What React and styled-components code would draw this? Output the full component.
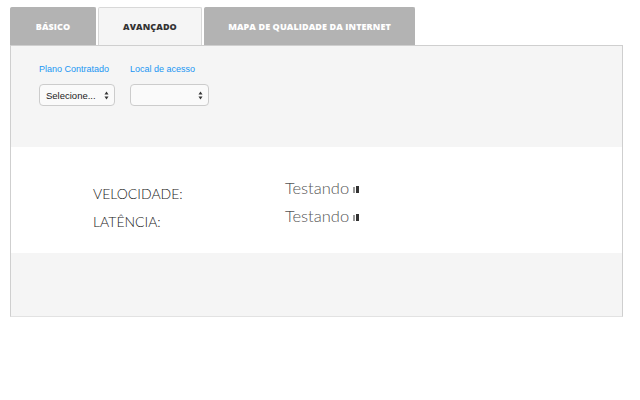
import React from 'react'
import styled, { createGlobalStyle } from 'styled-components'

const GlobalStyle = createGlobalStyle`
    body {
        margin: 0;
        background: #ffffff;
        font-family: "Liberation Sans", Arial, sans-serif;
    }
`

const Page = styled.div`
    padding: 7px 17px 0 10px;
`

const Tabs = styled.div`
    display: flex;
    gap: 2px;
`

const Tab = styled.div`
    display: flex;
    align-items: center;
    justify-content: center;
    width: ${({ width }) => width}px;
    height: 38px;
    box-sizing: border-box;
    background-color: ${({ active }) => (active ? '#f5f5f5' : '#b3b3b3')};
    border: 1px solid ${({ active }) => (active ? '#d8d8d8' : '#b3b3b3')};
    border-bottom: none;
    border-radius: 2px 2px 0 0;
    color: ${({ active }) => (active ? '#333333' : '#ffffff')};
    font-family: "Open Sans", sans-serif;
    font-weight: 800;
    font-size: 9px;
    letter-spacing: 0.1px;
    margin-bottom: ${({ active }) => (active ? '-1px' : '0')};
    position: relative;
    z-index: ${({ active }) => (active ? 1 : 0)};
`

const Panel = styled.div`
    border: 1px solid #cfcfcf;
    border-bottom-color: #e2e2e2;
    background-color: #f5f5f5;
`

const Filters = styled.div`
    display: flex;
    gap: 15px;
    height: 101px;
    padding: 18px 0 0 28px;
    box-sizing: border-box;
`

const Field = styled.div`
    display: flex;
    flex-direction: column;
    gap: 10px;
`

const Label = styled.label`
    font-size: 9px;
    color: #2196f3;
    font-family: "Liberation Sans", Arial, sans-serif;
`

const Select = styled.div`
    display: flex;
    align-items: center;
    justify-content: space-between;
    width: ${({ width }) => width}px;
    height: 22px;
    box-sizing: border-box;
    padding: 0 5px 0 6px;
    border: 1px solid #cccccc;
    border-radius: 4px;
    background-color: #fafafa;
    font-size: 9.5px;
    color: #222;
`

const Results = styled.div`
    background-color: #ffffff;
    height: 106px;
    padding: 31px 0 0 82px;
    box-sizing: border-box;
    display: grid;
    grid-template-columns: 192px auto;
    grid-auto-rows: 28px;
    justify-content: start;
    align-content: start;
`

const Metric = styled.div`
    font-family: "Lato", sans-serif;
    font-weight: 300;
    font-size: 14px;
    line-height: 18px;
    color: #222;
    padding-top: 7px;
`

const Status = styled.div`
    display: flex;
    align-items: center;
    align-self: start;
    gap: 4px;
    height: 20px;
    font-family: "Lato", sans-serif;
    font-weight: 300;
    font-size: 16.5px;
    color: #555;
`

const Footer = styled.div`
    height: 63px;
`

const Arrows = () => (
    <svg width="5" height="9" viewBox="0 0 5 9">
        <path d="M2.5 0.5 L4.5 3.5 H0.5 Z" fill="#333" />
        <path d="M2.5 8.5 L4.5 5.5 H0.5 Z" fill="#333" />
    </svg>
)

const Bars = () => (
    <svg width="6" height="7" viewBox="0 0 6 7" style={{ marginTop: 3 }}>
        <rect x="0" y="1" width="2" height="6" fill="#999" />
        <rect x="3" y="0" width="3" height="7" fill="#333" />
    </svg>
)

const App = () => (
    <>
        <GlobalStyle />
        <Page>
            <Tabs>
                <Tab width={86}>BÁSICO</Tab>
                <Tab width={104} active>AVANÇADO</Tab>
                <Tab width={211}>MAPA DE QUALIDADE DA INTERNET</Tab>
            </Tabs>
            <Panel>
                <Filters>
                    <Field>
                        <Label>Plano Contratado</Label>
                        <Select width={76}>
                            <span>Selecione...</span>
                            <Arrows />
                        </Select>
                    </Field>
                    <Field>
                        <Label>Local de acesso</Label>
                        <Select width={79}>
                            <span />
                            <Arrows />
                        </Select>
                    </Field>
                </Filters>
                <Results>
                    <Metric>VELOCIDADE:</Metric>
                    <Status>Testando <Bars /></Status>
                    <Metric>LATÊNCIA:</Metric>
                    <Status>Testando <Bars /></Status>
                </Results>
                <Footer />
            </Panel>
        </Page>
    </>
)

export default App
